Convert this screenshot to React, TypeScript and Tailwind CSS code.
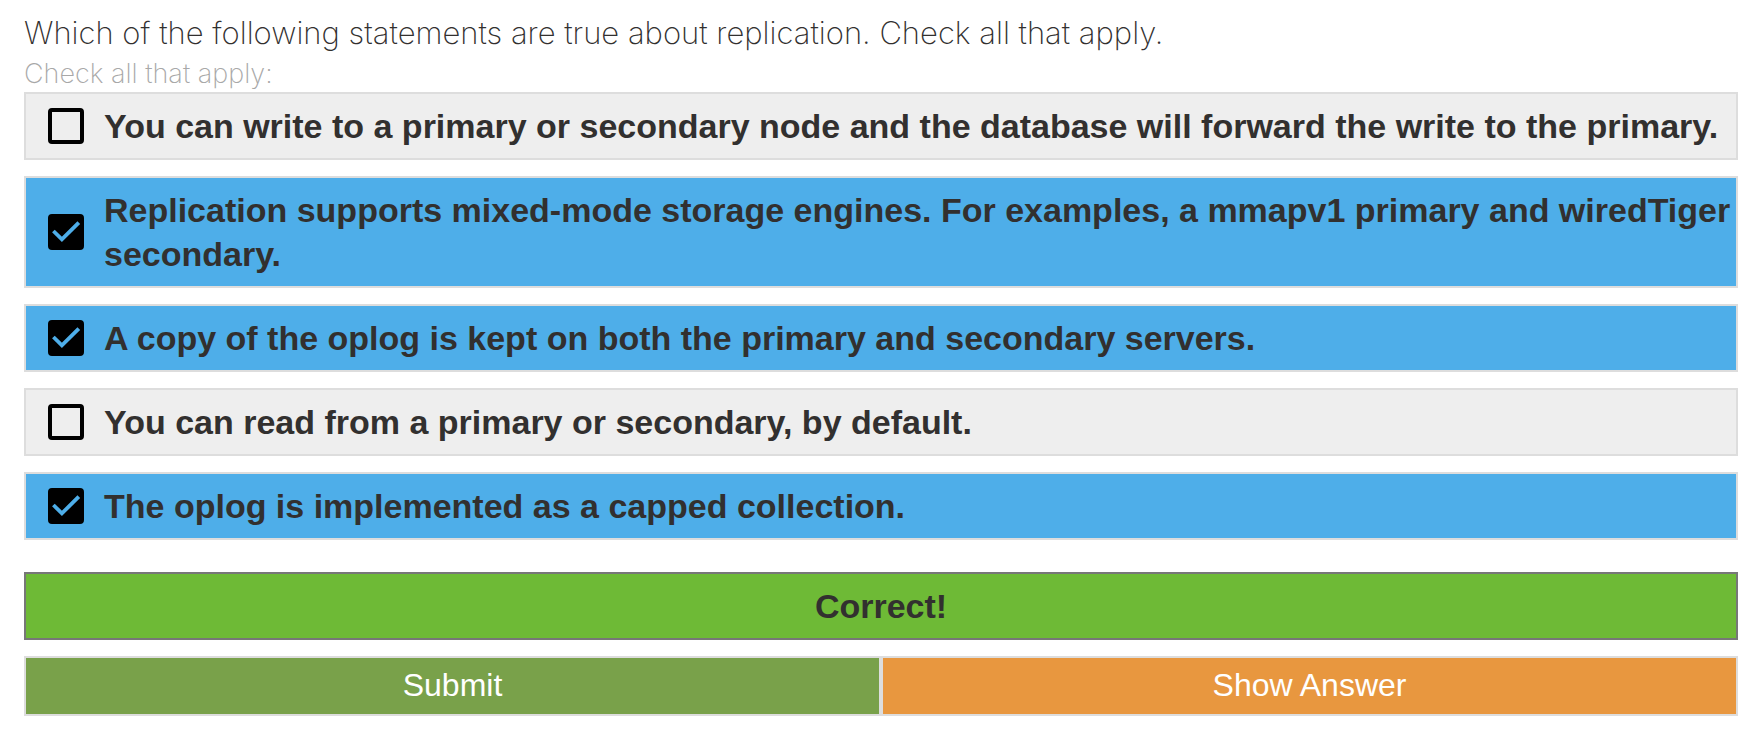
import { useState } from 'react'
import clsx from 'clsx'

type Option = { id: string; text: string; checked: boolean }

const initialOptions: Option[] = [
  {
    id: 'forward',
    text: 'You can write to a primary or secondary node and the database will forward the write to the primary.',
    checked: false,
  },
  {
    id: 'mixed',
    text: 'Replication supports mixed-mode storage engines. For examples, a mmapv1 primary and wiredTiger secondary.',
    checked: true,
  },
  {
    id: 'copy',
    text: 'A copy of the oplog is kept on both the primary and secondary servers.',
    checked: true,
  },
  { id: 'read', text: 'You can read from a primary or secondary, by default.', checked: false },
  { id: 'capped', text: 'The oplog is implemented as a capped collection.', checked: true },
]

function AnswerOption({ option, onToggle }: { option: Option; onToggle: () => void }) {
  return (
    <label
      htmlFor={option.id}
      className={clsx(
        'flex cursor-pointer items-center gap-5 border-2 border-[#dddddd] py-2.5 pl-[22px]',
        option.checked ? 'bg-[#4eaee9]' : 'bg-[#eeeeee]',
      )}
    >
      <span className="grid size-9 shrink-0">
        <input
          id={option.id}
          type="checkbox"
          checked={option.checked}
          onChange={onToggle}
          className="col-start-1 row-start-1 size-9 cursor-pointer appearance-none rounded border-4 border-black checked:bg-black"
        />
        {option.checked && (
          <svg
            viewBox="0 0 36 36"
            fill="none"
            aria-hidden="true"
            className="pointer-events-none col-start-1 row-start-1 size-9 stroke-[#4eaee9] stroke-[3.8]"
          >
            <path d="M5.4 17 13.9 25.4 30.8 8.6" />
          </svg>
        )}
      </span>
      <span className="min-w-0 flex-1 text-[34px] leading-[44px] font-bold">{option.text}</span>
    </label>
  )
}

export default function App() {
  const [options, setOptions] = useState(initialOptions)
  const toggle = (id: string) =>
    setOptions((list) => list.map((o) => (o.id === id ? { ...o, checked: !o.checked } : o)))

  return (
    <main className="bg-white pt-3 pr-[23px] pb-9 pl-6 font-['Liberation_Sans',Arial,sans-serif] text-[#32302f]">
      <form onSubmit={(e) => e.preventDefault()}>
        <fieldset>
          <legend className="font-['Inter',sans-serif] text-[31px] leading-[42px] font-extralight">
            Which of the following statements are true about replication. Check all that apply.
          </legend>
          <p className="pt-0.5 font-['Inter',sans-serif] text-[27px] leading-9 font-extralight text-[#a8a8a8]">
            Check all that apply:
          </p>
          <div className="flex flex-col gap-4">
            {options.map((option) => (
              <AnswerOption key={option.id} option={option} onToggle={() => toggle(option.id)} />
            ))}
          </div>
        </fieldset>
        <p
          role="status"
          className="mt-8 border-2 border-[#777777] bg-[#6eba36] py-2.5 text-center text-[34px] leading-[44px] font-bold"
        >
          Correct!
        </p>
        <div className="mt-4 flex text-[32px] leading-10 text-white">
          <button type="submit" className="flex-1 cursor-pointer border-2 border-[#dddddd] bg-[#79a14a] pt-[7px] pb-[9px]">
            Submit
          </button>
          <button type="button" className="flex-1 cursor-pointer border-2 border-[#dddddd] bg-[#e8973f] pt-[7px] pb-[9px]">
            Show Answer
          </button>
        </div>
      </form>
    </main>
  )
}
